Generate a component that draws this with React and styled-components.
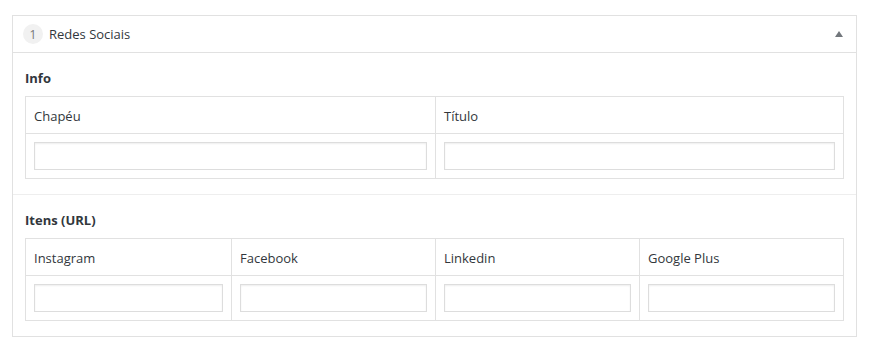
import styled, { createGlobalStyle } from "styled-components";

const Global = createGlobalStyle`
  body {
    margin: 0;
    padding: 15px 12px 0 12px;
    background: #ffffff;
    font-family: "Open Sans", "Noto Sans", sans-serif;
    color: #32373c;
  }
`;

const Panel = styled.div`
  width: 845px;
  box-sizing: border-box;
  border: 1px solid #e1e1e1;
  background: #fff;
`;

const Header = styled.div`
  display: flex;
  align-items: center;
  height: 36px;
  padding: 0 12px 0 10px;
  border-bottom: 1px solid #e1e1e1;
`;

const Badge = styled.span`
  display: inline-flex;
  align-items: center;
  justify-content: center;
  width: 20px;
  height: 20px;
  border-radius: 50%;
  background: #f1f1f1;
  color: #777;
  font-size: 12px;
  margin-right: 6px;
`;

const Title = styled.span`
  font-size: 13px;
  color: #32373c;
  flex: 1;
`;

const Toggle = styled.span`
  width: 0;
  height: 0;
  border-left: 4px solid transparent;
  border-right: 4px solid transparent;
  border-bottom: 6px solid #72777c;
  margin-right: 1px;
`;

const Section = styled.div`
  padding: 15px 12px;
  border-top: ${(p) => (p.$divided ? "1px solid #eeeeee" : "none")};
`;

const Label = styled.div`
  font-size: 13px;
  font-weight: 700;
  line-height: 20px;
  margin-bottom: 8px;
  color: #32373c;
`;

const Table = styled.div`
  display: grid;
  grid-template-columns: ${(p) => p.$cols};
  border: 1px solid #e1e1e1;
  border-right: none;
`;

const HeadCell = styled.div`
  height: 37px;
  box-sizing: border-box;
  display: flex;
  align-items: center;
  padding: 1px 8px 0;
  font-size: 13px;
  color: #32373c;
  border-right: 1px solid #e1e1e1;
  border-bottom: 1px solid #e1e1e1;
`;

const InputCell = styled.div`
  padding: 8px;
  border-right: 1px solid #e1e1e1;
`;

const Input = styled.input`
  display: block;
  width: 100%;
  height: 28px;
  box-sizing: border-box;
  border: 1px solid #dddddd;
  box-shadow: inset 0 1px 2px rgba(0, 0, 0, 0.07);
  background: #fff;
  outline: none;
  margin: 0;
`;

const FieldTable = ({ fields, cols }) => (
  <Table $cols={cols}>
    {fields.map((f) => (
      <HeadCell key={f}>{f}</HeadCell>
    ))}
    {fields.map((f) => (
      <InputCell key={f + "-in"}>
        <Input type="text" />
      </InputCell>
    ))}
  </Table>
);

export default function App() {
  return (
    <>
      <Global />
      <Panel>
        <Header>
          <Badge>1</Badge>
          <Title>Redes Sociais</Title>
          <Toggle />
        </Header>
        <Section>
          <Label>Info</Label>
          <FieldTable fields={["Chapéu", "Título"]} cols="410px 408px" />
        </Section>
        <Section $divided>
          <Label>Itens (URL)</Label>
          <FieldTable
            fields={["Instagram", "Facebook", "Linkedin", "Google Plus"]}
            cols="206px 204px 204px 204px"
          />
        </Section>
      </Panel>
    </>
  );
}
